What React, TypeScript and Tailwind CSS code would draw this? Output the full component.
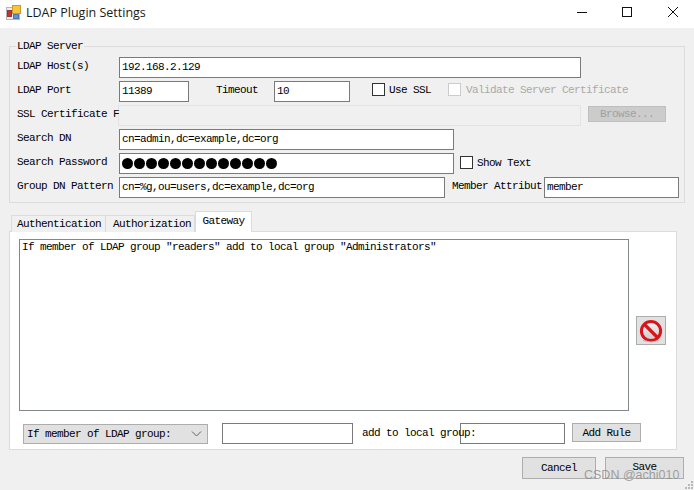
const mono = "font-['Liberation_Mono',monospace] text-[11px] tracking-[-0.6px] leading-[12px] text-black";

function Field({ className, children }: { className: string; children?: React.ReactNode }) {
  return (
    <div className={`h-[21px] shrink-0 border border-[#7a7a7a] bg-white pl-[2px] pb-[1px] flex items-center whitespace-nowrap overflow-hidden ${className}`}>
      {children}
    </div>
  );
}

function Label({ className, children }: { className: string; children: React.ReactNode }) {
  return <div className={`shrink-0 h-[17px] flex items-center whitespace-nowrap ${className}`}>{children}</div>;
}

function Check({ disabled }: { disabled?: boolean }) {
  return <div className={`w-[13px] h-[13px] shrink-0 border bg-white ${disabled ? "border-[#cccccc]" : "border-[#333333]"}`} />;
}

function StopIcon() {
  return (
    <svg width="26" height="26" viewBox="0 0 26 26">
      <defs>
        <linearGradient id="stopFill" x1="0" y1="0" x2="0" y2="1">
          <stop offset="0" stopColor="#f4f4f4" />
          <stop offset="1" stopColor="#c9c9c9" />
        </linearGradient>
      </defs>
      <circle cx="13" cy="13" r="9.6" fill="url(#stopFill)" stroke="#d8141a" strokeWidth="3" />
      <path d="M6.5 6.5 L19.5 19.5" stroke="#d8141a" strokeWidth="3.2" />
      <path d="M5 22.5 Q13 25.5 21 22.5" stroke="#b9b9b9" strokeWidth="1" fill="none" />
    </svg>
  );
}

function AppIcon() {
  return (
    <svg width="15" height="15" viewBox="0 0 15 15">
      <rect x="0.5" y="2.5" width="13" height="12" fill="#eeeeee" stroke="#b5b5b5" />
      <rect x="1.5" y="5.5" width="4" height="6" fill="#c8322a" stroke="#8a3a30" />
      <rect x="6.5" y="0.5" width="8" height="8" fill="#f8c53a" stroke="#c99a2a" />
      <rect x="7.5" y="9.5" width="5" height="4" fill="#5b93e0" stroke="#4a78b8" />
    </svg>
  );
}

export default function App() {
  return (
    <div className={`w-[694px] h-[490px] overflow-hidden relative bg-[#f0f0f0] ${mono}`}>
      {/* title bar */}
      <div className="h-[28px] bg-white flex items-center">
        <div className="ml-[6px] w-[15px] h-[15px] -mt-[4px]">
          <AppIcon />
        </div>
        <div className="ml-[5px] -mt-[3px] font-['Open_Sans',sans-serif] text-[12.5px] tracking-normal text-[#1a1a1a]">LDAP Plugin Settings</div>
        <div className="ml-auto flex items-center -mt-[5px] mr-[16px]">
          <svg width="10" height="10" viewBox="0 0 10 10"><path d="M0 5.5H10" stroke="#111" /></svg>
          <svg className="ml-[35px]" width="10" height="10" viewBox="0 0 10 10"><rect x="0.5" y="0.5" width="9" height="9" fill="none" stroke="#111" /></svg>
          <svg className="ml-[36px]" width="10" height="10" viewBox="0 0 10 10"><path d="M0 0L10 10M10 0L0 10" stroke="#111" /></svg>
        </div>
      </div>

      {/* LDAP Server group */}
      <fieldset className="ml-[9px] mt-[12px] w-[676px] h-[163px] border border-[#dcdcdc] pl-[7px] pt-[5px]">
        <legend className="ml-[-1px] px-[1px] leading-[12px]">LDAP Server</legend>
        <div className="flex flex-col gap-[3px]">
          <div className="flex items-start">
            <Label className="w-[102px]">LDAP Host(s)</Label>
            <Field className="w-[462px]">192.168.2.129</Field>
          </div>
          <div className="flex items-start">
            <Label className="w-[102px]">LDAP Port</Label>
            <Field className="w-[70px]">11389</Field>
            <Label className="ml-[27px] w-[58px]">Timeout</Label>
            <Field className="w-[76px]">10</Field>
            <div className="ml-[22px] h-[17px] flex items-center">
              <Check />
              <span className="ml-[4px]">Use SSL</span>
              <div className="ml-[17px]"><Check disabled /></div>
              <span className="ml-[5px] text-[#a9a9a9]">Validate Server Certificate</span>
            </div>
          </div>
          <div className="flex items-start">
            <Label className="w-[101px] z-10">SSL Certificate F</Label>
            <div className="h-[21px] w-[463px] shrink-0 border border-[#e3e3e3] bg-[#f0f0f0]" />
            <div className="ml-[7px] mt-[1px] w-[78px] h-[16px] bg-[#cccccc] border border-[#bfbfbf] flex items-center justify-center text-[#a0a0a0]">Browse...</div>
          </div>
          <div className="flex items-start">
            <Label className="w-[102px]">Search DN</Label>
            <Field className="w-[335px]">cn=admin,dc=example,dc=org</Field>
          </div>
          <div className="flex items-start">
            <Label className="w-[102px]">Search Password</Label>
            <Field className="w-[335px] gap-[1px]">
              {Array.from({ length: 13 }).map((_, i) => (
                <span key={i} className="w-[11px] h-[11px] rounded-full bg-black shrink-0" />
              ))}
            </Field>
            <div className="ml-[6px] h-[19px] flex items-center">
              <Check />
              <span className="ml-[4px]">Show Text</span>
            </div>
          </div>
          <div className="flex items-start">
            <Label className="w-[102px]">Group DN Pattern</Label>
            <Field className="w-[326px]">cn=%g,ou=users,dc=example,dc=org</Field>
            <Label className="ml-[7px] w-[92px]">Member Attribut</Label>
            <Field className="w-[135px]">member</Field>
          </div>
        </div>
      </fieldset>

      {/* tabs */}
      <div className="ml-[11px] mt-[8px] h-[21px] flex items-end relative z-10">
        <div className="h-[17px] w-[95px] bg-[#f0f0f0] border border-b-0 border-[#dcdcdc] flex items-center justify-center pl-[1px]">Authentication</div>
        <div className="h-[17px] w-[89px] bg-[#f0f0f0] border border-l-0 border-b-0 border-[#dcdcdc] flex items-center justify-center pl-[4px]">Authorization</div>
        <div className="h-[21px] w-[57px] bg-white border border-b-0 border-[#dcdcdc] flex items-start pt-[3px] justify-center">Gateway</div>
      </div>

      {/* Gateway panel */}
      <div className="ml-[9px] w-[668px] h-[219px] -mt-px bg-white border border-[#dcdcdc] pl-[9px] pt-[7px]">
        <div className="flex items-start">
          <div className="w-[610px] h-[172px] shrink-0 border border-[#828790] pl-[2px] pt-[1px] whitespace-nowrap">
            If member of LDAP group "readers" add to local group "Administrators"
          </div>
          <button className="ml-[7px] mt-[77px] w-[30px] h-[29px] bg-[#e1e1e1] border border-[#adadad] flex items-center justify-center">
            <StopIcon />
          </button>
        </div>
        <div className="mt-[12px] ml-[4px] flex items-start">
          <div className="w-[185px] h-[20px] shrink-0 bg-[#e1e1e1] border border-[#adadad] flex items-center pl-[3px] pr-[3px] justify-between mt-px">
            <span>If member of LDAP group:</span>
            <svg width="11" height="6" viewBox="0 0 11 6" className="mr-[2px]"><path d="M1 0.5L5.5 5L10 0.5" fill="none" stroke="#606060" /></svg>
          </div>
          <Field className="ml-[14px] w-[131px]" />
          <Label className="ml-[9px] w-[98px] mt-[1px] z-10">add to local group:</Label>
          <Field className="w-[105px]" />
          <div className="ml-[7px] w-[69px] h-[19px] bg-[#e1e1e1] border border-[#adadad] flex items-center justify-center">Add Rule</div>
        </div>
      </div>

      {/* footer buttons */}
      <div className="mt-[7px] ml-[522px] flex gap-[9px]">
        <div className="w-[74px] h-[22px] bg-[#e1e1e1] border border-[#adadad] flex items-center justify-center">Cancel</div>
        <div className="w-[79px] h-[22px] bg-[#e1e1e1] border border-[#adadad] flex items-center justify-center pb-[2px]">Save</div>
      </div>

      {/* size grip */}
      <svg className="absolute right-0 bottom-0" width="10" height="10" viewBox="0 0 10 10" fill="#b8b8b8">
        <rect x="7" y="1" width="2" height="2" />
        <rect x="4" y="4" width="2" height="2" />
        <rect x="7" y="4" width="2" height="2" />
        <rect x="1" y="7" width="2" height="2" />
        <rect x="4" y="7" width="2" height="2" />
        <rect x="7" y="7" width="2" height="2" />
      </svg>

      {/* watermark */}
      <div className="absolute left-[584px] top-[468px] font-['Liberation_Sans',sans-serif] text-[12.5px] tracking-normal leading-[15px] text-[#8c8c8c]/80 whitespace-nowrap">CSDN @achi010</div>
    </div>
  );
}
